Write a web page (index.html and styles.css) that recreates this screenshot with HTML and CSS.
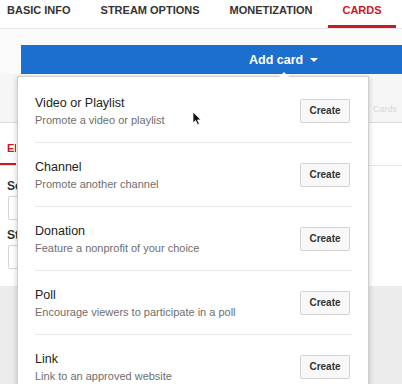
FILE: index.html
```html
<!DOCTYPE html>
<html lang="en">
<head>
    <title>Cards</title>
    <link rel="stylesheet" href="styles.css">
</head>
<body>
    <nav class="tabs">
        <a class="tab" href="#">Basic info</a>
        <a class="tab" href="#">Stream options</a>
        <a class="tab" href="#">Monetization</a>
        <a class="tab active" href="#">Cards</a>
    </nav>

    <div class="toolbar">
        <button class="add-card">Add card <span class="arrow"></span></button>
    </div>

    <div class="editor">
        <div class="band"><span class="band-text">Cards</span></div>
        <div class="subtabs">
            <span class="subtab active">Edit</span>
        </div>
        <div class="fields">
            <label class="field-label">Select</label>
            <div class="field-input"></div>
            <label class="field-label">Start time</label>
            <div class="field-input"></div>
        </div>
    </div>
    <div class="footer"></div>

    <div class="menu">
        <div class="card-type">
            <div>
                <div class="card-title">Video or Playlist</div>
                <div class="card-desc">Promote a video or playlist</div>
            </div>
            <button class="create">Create</button>
        </div>
        <div class="card-type">
            <div>
                <div class="card-title">Channel</div>
                <div class="card-desc">Promote another channel</div>
            </div>
            <button class="create">Create</button>
        </div>
        <div class="card-type">
            <div>
                <div class="card-title">Donation</div>
                <div class="card-desc">Feature a nonprofit of your choice</div>
            </div>
            <button class="create">Create</button>
        </div>
        <div class="card-type">
            <div>
                <div class="card-title">Poll</div>
                <div class="card-desc">Encourage viewers to participate in a poll</div>
            </div>
            <button class="create">Create</button>
        </div>
        <div class="card-type">
            <div>
                <div class="card-title">Link</div>
                <div class="card-desc">Link to an approved website</div>
            </div>
            <button class="create">Create</button>
        </div>
    </div>

    <svg class="cursor" width="11" height="15" viewBox="0 0 11 15">
        <path d="M1 1 L1 12 L3.6 9.6 L5.6 13.8 L7.4 13 L5.5 8.9 L9 8.9 Z" fill="#111" stroke="#fff" stroke-width="0.8"/>
    </svg>
</body>
</html>
```

FILE: styles.css
```css
* {
    box-sizing: border-box;
    margin: 0;
    padding: 0;
}

body {
    width: 402px;
    height: 384px;
    overflow: hidden;
    position: relative;
    background-color: #ececec;
    font-family: "Liberation Sans", Arial, sans-serif;
    color: #222;
}

.tabs {
    display: flex;
    gap: 2px;
    height: 29px;
    margin-left: -7px;
    background: #fff;
    border-bottom: 1px solid #e8e8e8;
}

.tab {
    display: block;
    padding: 4px 14px 0;
    font-size: 11px;
    font-weight: 700;
    line-height: 13px;
    text-transform: uppercase;
    color: #333;
    text-decoration: none;
    border-bottom: 3px solid transparent;
}

.tab.active {
    color: #cc181e;
    border-bottom-color: #cc181e;
}

.toolbar {
    background: #fafafa;
    padding: 16px 0 0 21px;
}

.add-card {
    display: flex;
    align-items: center;
    width: 100%;
    height: 29px;
    padding-left: 228px;
    border: none;
    background: #1d6fce;
    color: #fff;
    font: inherit;
    font-size: 12.5px;
    font-weight: 700;
}

.arrow {
    margin-left: 7px;
    border-left: 4px solid transparent;
    border-right: 4px solid transparent;
    border-top: 4px solid #fff;
}

.editor {
    background: #fff;
    padding-bottom: 9px;
}

.band {
    height: 49px;
    background: #f6f6f6;
    border-bottom: 1px solid #dcdcdc;
    padding: 24px 0 0 373px;
}

.band-text {
    font-size: 9px;
    color: #d8d8d8;
}

.subtabs {
    height: 43px;
    border-bottom: 1px solid #e6e6e6;
}

.subtab {
    display: block;
    width: 16px;
    height: 42px;
    padding: 19px 0 0 7px;
    overflow: hidden;
    font-size: 11px;
    font-weight: 700;
    text-transform: uppercase;
    color: #cc181e;
}

.subtab.active {
    border-bottom: 2px solid #cc181e;
}

.fields {
    width: 17px;
    overflow: hidden;
    padding: 13px 0 0 7px;
}

.field-label {
    display: block;
    white-space: nowrap;
    font-size: 12px;
    font-weight: 700;
    line-height: 14px;
    color: #333;
}

.field-input {
    width: 120px;
    height: 24px;
    margin: 3px 0 8px 1px;
    border: 1px solid #d6d6d6;
    border-radius: 2px;
}

.footer {
    height: 120px;
    background: #ececec;
}

.menu {
    position: absolute;
    top: 76px;
    left: 17px;
    width: 352px;
    height: 330px;
    padding-top: 2px;
    background: #fff;
    border: 1px solid #cfcfcf;
    box-shadow: 0 2px 6px rgba(0, 0, 0, 0.2);
}

.menu::before {
    content: "";
    position: absolute;
    top: -5px;
    left: 261px;
    border-left: 5px solid transparent;
    border-right: 5px solid transparent;
    border-bottom: 5px solid #fff;
}

.card-type {
    display: flex;
    align-items: center;
    justify-content: space-between;
    height: 64px;
    margin: 0 16px 0 17px;
    border-bottom: 1px solid #e8e8e8;
}

.card-title {
    font-size: 12.5px;
    line-height: 16px;
    color: #222;
}

.card-desc {
    margin-top: 2px;
    font-size: 11px;
    line-height: 14px;
    color: #6e6e6e;
}

.create {
    width: 50px;
    height: 24px;
    margin-right: 2px;
    background: #f8f8f8;
    border: 1px solid #d3d3d3;
    border-radius: 2px;
    font: inherit;
    font-size: 10px;
    font-weight: 700;
    color: #333;
}

.cursor {
    position: absolute;
    top: 111px;
    left: 192px;
}
```
